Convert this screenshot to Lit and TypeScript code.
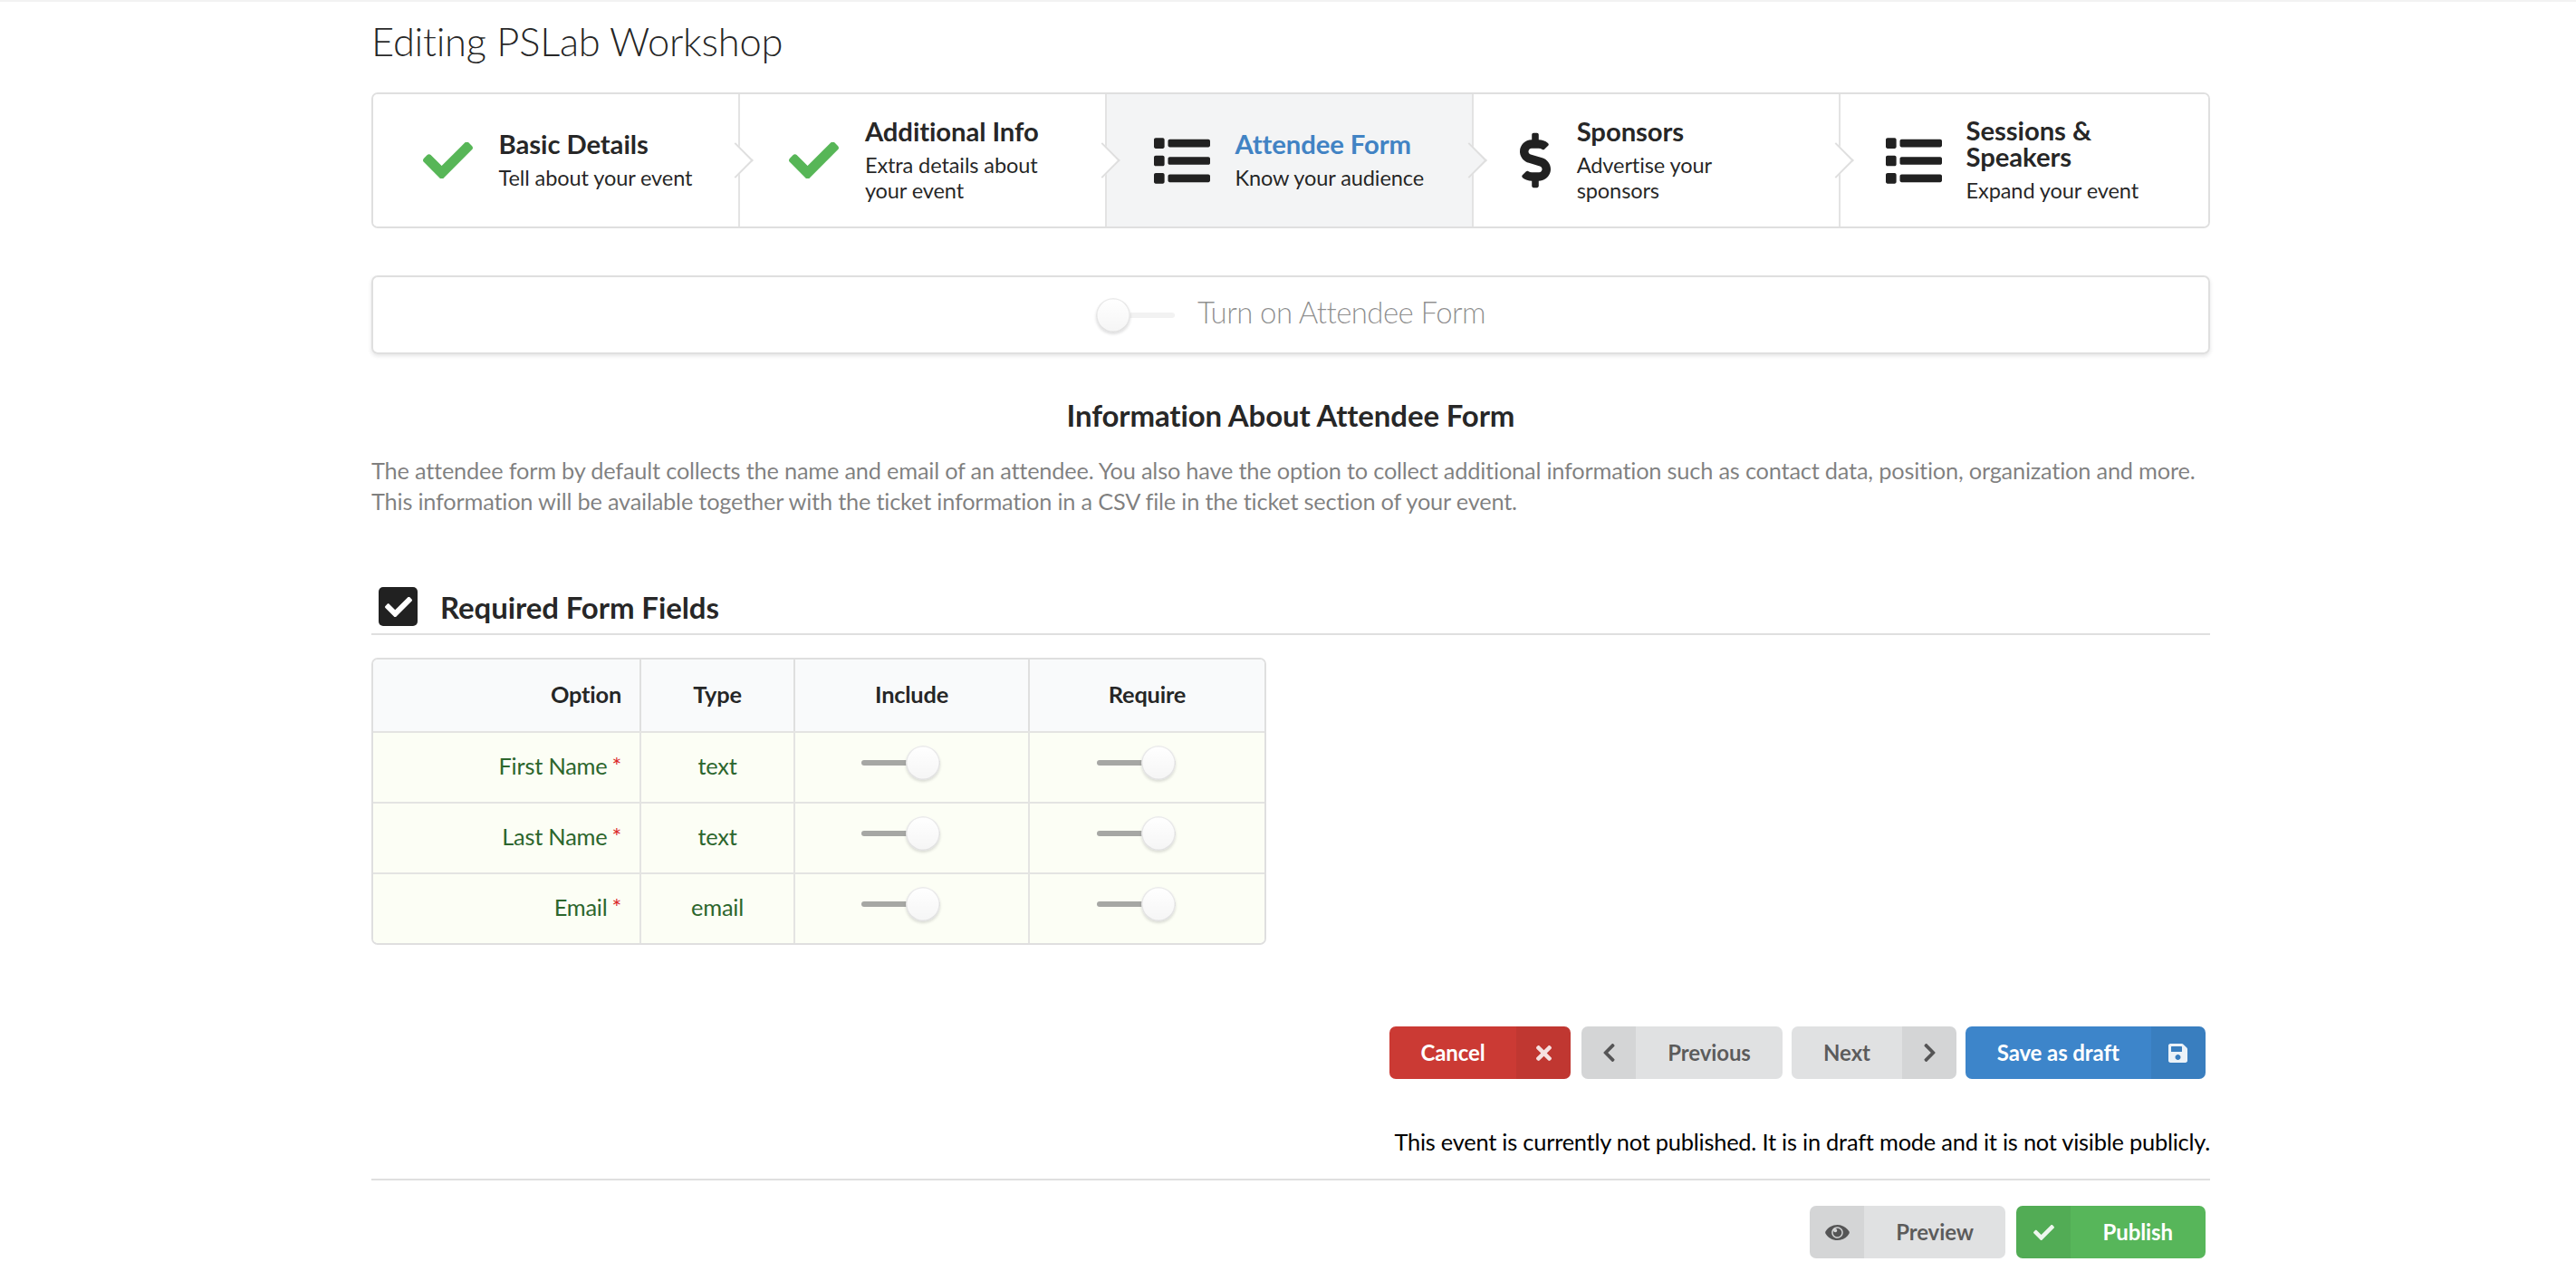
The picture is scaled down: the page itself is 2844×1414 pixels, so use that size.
import { LitElement, html, css, svg } from 'lit';
import { customElement } from 'lit/decorators.js';
import { classMap } from 'lit/directives/class-map.js';

const icons: Record<string, { box: string; d: string }> = {
  check: { box: '0 72 512 368', d: 'M173.898 439.404l-166.4-166.4c-9.997-9.997-9.997-26.206 0-36.204l36.203-36.204c9.997-9.998 26.207-9.998 36.204 0L192 312.69 432.095 72.596c9.997-9.997 26.207-9.997 36.204 0l36.203 36.204c9.997 9.997 9.997 26.206 0 36.204l-294.4 294.401c-9.998 9.997-26.207 9.997-36.204-.001z' },
  list: { box: '0 48 512 416', d: 'M128 116V76c0-8.837 7.163-16 16-16h352c8.837 0 16 7.163 16 16v40c0 8.837-7.163 16-16 16H144c-8.837 0-16-7.163-16-16zm16 176h352c8.837 0 16-7.163 16-16v-40c0-8.837-7.163-16-16-16H144c-8.837 0-16 7.163-16 16v40c0 8.837 7.163 16 16 16zm0 160h352c8.837 0 16-7.163 16-16v-40c0-8.837-7.163-16-16-16H144c-8.837 0-16 7.163-16 16v40c0 8.837 7.163 16 16 16zM16 144h64c8.837 0 16-7.163 16-16V64c0-8.837-7.163-16-16-16H16C7.163 48 0 55.163 0 64v64c0 8.837 7.163 16 16 16zm0 160h64c8.837 0 16-7.163 16-16v-64c0-8.837-7.163-16-16-16H16c-8.837 0-16 7.163-16 16v64c0 8.837 7.163 16 16 16zm0 160h64c8.837 0 16-7.163 16-16v-64c0-8.837-7.163-16-16-16H16c-8.837 0-16 7.163-16 16v64c0 8.837 7.163 16 16 16z' },
  dollar: { box: '0 0 288 512', d: 'M209.2 233.4l-108-31.6C88.7 198.2 80 186.5 80 173.5c0-16.3 13.2-29.5 29.5-29.5h66.3c12.2 0 24.2 3.7 34.2 10.5 6.1 4.1 14.3 3.1 19.5-2l34.8-34c7.1-6.9 6.1-18.4-1.8-24.5C238 74.8 207.4 64.1 176 64V16c0-8.8-7.2-16-16-16h-32c-8.8 0-16 7.2-16 16v48h-2.5C45.8 64-5.4 118.7.5 183.6c4.2 46.1 39.4 83.6 83.8 96.6l102.5 30c12.5 3.7 21.2 15.3 21.2 28.3 0 16.3-13.2 29.5-29.5 29.5h-66.3C100 368 88 364.3 78 357.5c-6.1-4.1-14.3-3.1-19.5 2l-34.8 34c-7.1 6.9-6.1 18.4 1.8 24.5 24.5 19.2 55.1 29.9 86.5 30v48c0 8.8 7.2 16 16 16h32c8.8 0 16-7.2 16-16v-48.2c46.6-.9 90.3-28.6 105.7-72.7 21.5-61.6-14.6-124.8-72.5-141.7z' },
  times: { box: '0 80 352 352', d: 'M242.72 256l100.07-100.07c12.28-12.28 12.28-32.19 0-44.48l-22.24-22.24c-12.28-12.28-32.19-12.28-44.48 0L176 189.28 75.93 89.21c-12.28-12.28-32.19-12.28-44.48 0L9.21 111.45c-12.28 12.28-12.28 32.19 0 44.48L109.28 256 9.21 356.07c-12.28 12.28-12.28 32.19 0 44.48l22.24 22.24c12.28 12.28 32.2 12.28 44.48 0L176 322.72l100.07 100.07c12.28 12.28 32.2 12.28 44.48 0l22.24-22.24c12.28-12.28 12.28-32.19 0-44.48L242.72 256z' },
  save: { box: '0 32 448 448', d: 'M433.941 129.941l-83.882-83.882A48 48 0 0 0 316.118 32H48C21.49 32 0 53.49 0 80v352c0 26.51 21.49 48 48 48h352c26.51 0 48-21.49 48-48V163.882a48 48 0 0 0-14.059-33.941zM224 416c-35.346 0-64-28.654-64-64 0-35.346 28.654-64 64-64s64 28.654 64 64c0 35.346-28.654 64-64 64zm96-304.52V212c0 6.627-5.373 12-12 12H76c-6.627 0-12-5.373-12-12V108c0-6.627 5.373-12 12-12h228.52c3.183 0 6.235 1.264 8.485 3.515l3.48 3.48A11.996 11.996 0 0 1 320 111.48z' },
  eye: { box: '0 72 576 368', d: 'M569.354 231.631C512.969 135.949 407.81 72 288 72 168.14 72 63.004 135.994 6.646 231.631a47.999 47.999 0 0 0 0 48.739C63.031 376.051 168.19 440 288 440c119.86 0 224.996-63.994 281.354-159.631a47.999 47.999 0 0 0 0-48.738zM288 392c-75.162 0-136-60.827-136-136 0-75.162 60.826-136 136-136 75.162 0 136 60.826 136 136 0 75.162-60.826 136-136 136zm104-136c0 57.438-46.562 104-104 104s-104-46.562-104-104c0-17.708 4.431-34.379 12.236-48.973l-.001.032c0 23.651 19.173 42.823 42.824 42.823s42.823-19.173 42.823-42.823c0-23.651-19.173-42.824-42.823-42.824l-.032.001C253.621 156.431 270.292 152 288 152c57.438 0 104 46.562 104 104z' },
  left: { box: '27 37 266 438', d: 'M34.52 239.03L228.87 44.69c9.37-9.37 24.57-9.37 33.94 0l22.67 22.67c9.36 9.36 9.37 24.52.04 33.9L131.49 256l154.02 154.75c9.34 9.38 9.32 24.54-.04 33.9l-22.67 22.67c-9.37 9.37-24.57 9.37-33.94 0L34.52 272.97c-9.37-9.37-9.37-24.57 0-33.94z' },
  right: { box: '27 37 266 438', d: 'M285.476 272.971L91.132 467.314c-9.373 9.373-24.569 9.373-33.941 0l-22.667-22.667c-9.357-9.357-9.375-24.522-.04-33.901L188.505 256 34.484 101.255c-9.335-9.379-9.317-24.544.04-33.901l22.667-22.667c9.373-9.373 24.569-9.373 33.941 0L285.475 239.03c9.373 9.372 9.373 24.568.001 33.941z' },
};

const icon = (name: string) => html`<svg class="icon ${name}" viewBox=${icons[name].box} fill="currentColor">${svg`<path d=${icons[name].d}></path>`}</svg>`;

const steps = [
  { icon: 'check', title: 'Basic Details', desc: 'Tell about your event', active: false },
  { icon: 'check', title: 'Additional Info', desc: 'Extra details about your event', active: false },
  { icon: 'list', title: 'Attendee Form', desc: 'Know your audience', active: true },
  { icon: 'dollar', title: 'Sponsors', desc: 'Advertise your sponsors', active: false },
  { icon: 'list', title: 'Sessions & Speakers', desc: 'Expand your event', active: false },
];

const fields = [
  { name: 'First Name', type: 'text' },
  { name: 'Last Name', type: 'text' },
  { name: 'Email', type: 'email' },
];

@customElement('app-root')
export class AppRoot extends LitElement {
  static styles = css`
    :host {
      display: block;
      font-family: Lato, "Liberation Sans", sans-serif;
      font-size: 25.4px;
      letter-spacing: -0.22px;
      font-variant-ligatures: none;
      color: rgba(0, 0, 0, 0.87);
      background: #fff;
      border-top: 2px solid #f2f2f2;
    }
    .page {
      width: 2030px;
      margin-left: 410px;
      padding-top: 15px;
    }
    .icon { display: block; flex: none; }

    h1 {
      margin: 0 0 29px;
      font-size: 43.5px;
      line-height: 56px;
      font-weight: 300;
      letter-spacing: -0.25px;
    }

    .steps {
      display: flex;
      height: 150px;
      box-sizing: border-box;
      border: 2px solid #dfdfdf;
      border-radius: 7px;
    }
    .step {
      position: relative;
      flex: 0 0 404.9px;
      box-sizing: border-box;
      display: flex;
      align-items: center;
      justify-content: center;
      gap: 27px;
      padding: 0 50px;
      background: #fff;
      border-right: 2px solid #e3e3e3;
    }
    .step:first-child { border-radius: 5px 0 0 5px; }
    .step:last-child { flex: 1 1 0; border-right: 0; border-radius: 0 5px 5px 0; }
    .step::after {
      content: '';
      position: absolute;
      z-index: 2;
      top: 50%;
      right: 3px;
      width: 28px;
      height: 28px;
      box-sizing: border-box;
      background: inherit;
      border: solid #dfdfdf;
      border-width: 2px 2px 0 0;
      transform: translate(50%, -50%) rotate(45deg);
    }
    .step:last-child::after { display: none; }
    .step.active { background: #f3f4f5; }
    .step .icon { color: #212121; }
    .step .icon.check { width: 55px; height: 40px; margin: 0 2px 0 4px; color: #57b657; }
    .step .icon.list { width: 62px; height: 51px; }
    .step .icon.dollar { width: 34px; height: 62px; margin: 0 2px 0 1px; }
    .step-title { font-size: 29.3px; line-height: 29px; font-weight: 700; letter-spacing: -0.1px; color: rgba(0, 0, 0, 0.87); }
    .step.active .step-title { color: #4183c4; }
    .step-desc { font-size: 23.6px; line-height: 28.5px; margin-top: 9px; letter-spacing: -0.13px; }

    .toggle-seg {
      margin-top: 52px;
      height: 87px;
      box-sizing: border-box;
      border: 2px solid #dfdfdf;
      border-radius: 7px;
      box-shadow: 0 2px 4px rgba(34, 36, 38, 0.12);
      display: flex;
      align-items: center;
      justify-content: center;
      gap: 25px;
      font-size: 33px;
      letter-spacing: -0.6px;
      font-weight: 300;
      color: rgba(0, 0, 0, 0.45);
    }
    .toggle-seg .label { margin-bottom: 7px; }

    .toggle {
      position: relative;
      display: block;
      flex: none;
      width: 87px;
      height: 38px;
    }
    .toggle::before {
      content: '';
      position: absolute;
      left: 0;
      right: 0;
      top: 16px;
      height: 6px;
      border-radius: 3px;
      background: #a6a7a4;
    }
    .toggle::after {
      content: '';
      position: absolute;
      right: 0;
      top: 0;
      width: 38px;
      height: 38px;
      border-radius: 50%;
      background: linear-gradient(transparent, rgba(0, 0, 0, 0.04)) #fff;
      box-shadow: 0 2px 3px rgba(34, 36, 38, 0.15), 0 0 0 1.5px rgba(34, 36, 38, 0.09) inset;
    }
    .toggle.off::before { background: #f2f2f2; }
    .toggle.off::after { right: auto; left: 0; }

    h2 {
      margin: 47px 0 0;
      text-align: center;
      font-size: 33px;
      line-height: 40px;
      font-weight: 700;
      letter-spacing: -0.13px;
    }
    .intro {
      margin: 24px 0 0;
      line-height: 34px;
      color: rgba(0, 0, 0, 0.5);
    }

    .section-head {
      margin-top: 75px;
      display: flex;
      align-items: center;
      height: 49px;
      padding: 0 0 5px 8px;
      gap: 25px;
      border-bottom: 2px solid #dfdfdf;
      font-size: 33px;
      letter-spacing: -0.1px;
      font-weight: 700;
    }
    .checkbox {
      display: flex;
      align-items: center;
      justify-content: center;
      width: 43px;
      height: 43px;
      border-radius: 5px;
      background: #212121;
      color: #fff;
    }
    .checkbox .icon { width: 30px; height: 22px; }

    table {
      margin-top: 25px;
      width: 987px;
      box-sizing: border-box;
      table-layout: fixed;
      border-collapse: separate;
      border-spacing: 0;
      border: 2px solid #dfdfdf;
      border-radius: 7px;
    }
    th, td {
      box-sizing: border-box;
      height: 78px;
      padding: 0 20px 4px;
      text-align: center;
      border-right: 2px solid #e4e4e2;
      border-top: 2px solid #e4e4e2;
    }
    th:last-child, td:last-child { border-right: 0; }
    th {
      height: 79px;
      border-top: 0;
      background: #f9fafb;
      font-weight: 700;
      color: rgba(0, 0, 0, 0.87);
      border-right-color: #dfdfdf;
    }
    th:first-child { border-radius: 5px 0 0 0; }
    th:last-child { border-radius: 0 5px 0 0; }
    td { background: #fcfef5; color: #2c662d; }
    tr:last-child td:first-child { border-radius: 0 0 0 5px; }
    tr:last-child td:last-child { border-radius: 0 0 5px 0; }
    .name { text-align: right; }
    .req { color: #db2828; margin-left: 5px; }
    td.switch { padding-right: 45px; }
    td .toggle { margin: -6px auto 0; }

    .actions {
      display: flex;
      justify-content: flex-end;
      gap: 10px;
      padding-right: 5.5px;
      margin-top: 90px;
    }
    .actions.bottom { margin-top: 28px; }
    .btn {
      display: flex;
      align-items: stretch;
      height: 58px;
      border-radius: 7px;
      overflow: hidden;
      font-size: 24px;
      letter-spacing: -0.1px;
      font-weight: 700;
      line-height: 58px;
      color: #fff;
    }
    .btn-label { flex: 1; text-align: center; }
    .btn-icon {
      flex: none;
      width: 60px;
      display: flex;
      align-items: center;
      justify-content: center;
      background: rgba(0, 0, 0, 0.05);
    }
    .btn.red { background: #cb3a34; width: 200px; margin-right: 2px; }
    .btn.blue { background: #3d85ca; width: 264.5px; }
    .btn.green { background: #57b65a; width: 208.5px; }
    .btn.grey { background: #e0e1e2; color: rgba(0, 0, 0, 0.6); }
    .btn.previous { width: 222px; }
    .btn.next { width: 182px; }
    .btn.preview { width: 216px; margin-right: 2px; }
    .btn .icon.times { width: 17px; height: 17px; opacity: 0.85; }
    .btn .icon.save { width: 21px; height: 21px; opacity: 0.9; }
    .btn .icon.check { width: 23px; height: 17px; opacity: 0.9; }
    .btn .icon.eye { width: 27px; height: 17px; }
    .btn .icon.left, .btn .icon.right { width: 13px; height: 20px; }

    .notice {
      margin: 52px 0 0;
      text-align: right;
      line-height: 34px;
      color: #000;
    }
    hr {
      margin: 24px 0 0;
      border: 0;
      height: 2px;
      background: #dfdfdf;
    }
  `;

  renderStep(s: (typeof steps)[number]) {
    return html`
      <div class=${classMap({ step: true, active: s.active })}>
        ${icon(s.icon)}
        <div>
          <div class="step-title">${s.title}</div>
          <div class="step-desc">${s.desc}</div>
        </div>
      </div>
    `;
  }

  renderField(f: (typeof fields)[number]) {
    return html`
      <tr>
        <td class="name">${f.name}<span class="req">*</span></td>
        <td>${f.type}</td>
        <td class="switch"><span class="toggle"></span></td>
        <td class="switch"><span class="toggle"></span></td>
      </tr>
    `;
  }

  render() {
    return html`
      <div class="page">
        <h1>Editing PSLab Workshop</h1>

        <div class="steps">${steps.map((s) => this.renderStep(s))}</div>

        <div class="toggle-seg">
          <span class="toggle off"></span>
          <span class="label">Turn on Attendee Form</span>
        </div>

        <h2>Information About Attendee Form</h2>
        <p class="intro">
          The attendee form by default collects the name and email of an attendee. You also have the option to collect additional information such as contact data, position, organization and more. This information will be available together with the ticket information in a CSV file in the ticket section of your event.
        </p>

        <div class="section-head">
          <span class="checkbox">${icon('check')}</span>
          <span>Required Form Fields</span>
        </div>

        <table>
          <colgroup>
            <col style="width: 296px" />
            <col style="width: 170px" />
            <col style="width: 259px" />
            <col style="width: 259px" />
          </colgroup>
          <thead>
            <tr>
              <th class="name">Option</th>
              <th>Type</th>
              <th>Include</th>
              <th>Require</th>
            </tr>
          </thead>
          <tbody>${fields.map((f) => this.renderField(f))}</tbody>
        </table>

        <div class="actions">
          <div class="btn red"><span class="btn-label">Cancel</span><span class="btn-icon">${icon('times')}</span></div>
          <div class="btn grey previous"><span class="btn-icon">${icon('left')}</span><span class="btn-label">Previous</span></div>
          <div class="btn grey next"><span class="btn-label">Next</span><span class="btn-icon">${icon('right')}</span></div>
          <div class="btn blue"><span class="btn-label">Save as draft</span><span class="btn-icon">${icon('save')}</span></div>
        </div>

        <p class="notice">This event is currently not published. It is in draft mode and it is not visible publicly.</p>
        <hr />

        <div class="actions bottom">
          <div class="btn grey preview"><span class="btn-icon">${icon('eye')}</span><span class="btn-label">Preview</span></div>
          <div class="btn green"><span class="btn-icon">${icon('check')}</span><span class="btn-label">Publish</span></div>
        </div>
      </div>
    `;
  }
}
